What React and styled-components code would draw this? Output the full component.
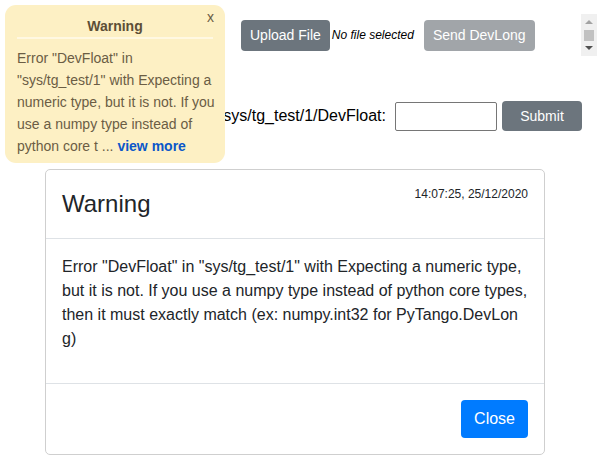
import React from 'react'
import styled, { createGlobalStyle } from 'styled-components'

const GlobalStyle = createGlobalStyle`
  html, body {
    margin: 0;
    padding: 0;
    background: #fff;
    font-family: "Liberation Sans", Arial, sans-serif;
    color: #212529;
  }
`

const Page = styled.div`
  position: relative;
  width: 602px;
  height: 461px;
  overflow: hidden;
  padding-top: 14px;
  box-sizing: border-box;
`

const TopRow = styled.div`
  display: flex;
  align-items: center;
  padding-left: 241px;
  padding-right: 5px;
  height: 42px;
`

const Button = styled.button`
  font-family: inherit;
  font-size: ${p => (p.$size === 'lg' ? '16px' : '14px')};
  line-height: ${p => (p.$size === 'lg' ? '24px' : '21px')};
  padding: ${p => (p.$size === 'lg' ? '6px 12px' : '4px 8px')};
  border: 1px solid transparent;
  border-radius: 4px;
  color: #fff;
  background: ${p => p.$bg || '#6c757d'};
  cursor: pointer;
  margin-left: ${p => p.$ml || 0}px;
`

const FileName = styled.span`
  font-size: 12px;
  font-style: italic;
  color: #000;
  margin-left: 2px;
`

const Scroller = styled.div`
  margin-left: auto;
  width: 16px;
  height: 42px;
  background: #f0f0f0;
  display: flex;
  flex-direction: column;
  align-items: center;
  justify-content: space-between;
  padding: 6px 0;
  box-sizing: border-box;
`

const Arrow = styled.div`
  width: 0;
  height: 0;
  border-left: 4px solid transparent;
  border-right: 4px solid transparent;
  ${p => (p.$down
    ? 'border-top: 4px solid #505050;'
    : 'border-bottom: 4px solid #a3a3a3;')}
`

const Thumb = styled.div`
  width: 10px;
  height: 11px;
  background: #c1c1c1;
`

const FormRow = styled.div`
  display: flex;
  justify-content: flex-end;
  align-items: center;
  padding-right: 20px;
  margin-top: 45px;
`

const Label = styled.label`
  font-size: 16px;
  color: #000;
  margin-right: 9px;
`

const Input = styled.input`
  width: 102px;
  height: 29px;
  box-sizing: border-box;
  border: 1px solid #767676;
  border-radius: 2px;
  margin-right: 5px;
`

const SubmitButton = styled(Button)`
  width: 80px;
  height: 30px;
  padding: 0;
`

const Modal = styled.div`
  margin: 38px 0 0 45px;
  width: 500px;
  border: 1px solid #cfcfcf;
  border-radius: 5px;
  box-sizing: border-box;
`

const ModalHeader = styled.div`
  display: flex;
  justify-content: space-between;
  align-items: flex-start;
  padding: 16px;
  border-bottom: 1px solid #dee2e6;
`

const ModalTitle = styled.h4`
  margin: 0;
  font-size: 24px;
  font-weight: 400;
  line-height: 36px;
`

const Stamp = styled.span`
  font-size: 12px;
  line-height: 16px;
`

const ModalBody = styled.div`
  padding: 16px;
  border-bottom: 1px solid #dee2e6;

  p {
    margin: 0 0 16px;
    font-size: 16px;
    line-height: 24px;
    word-break: break-all;
  }
`

const ModalFooter = styled.div`
  display: flex;
  justify-content: flex-end;
  padding: 16px;
`

const Toast = styled.div`
  position: absolute;
  top: 5px;
  left: 5px;
  width: 220px;
  box-sizing: border-box;
  padding: 10px 8px 6px 12px;
  background: #fdf0c4;
  border-radius: 11px;
  color: #6b5d44;
`

const ToastTitle = styled.div`
  text-align: center;
  font-weight: 700;
  font-size: 14px;
  line-height: 22px;
  color: #5c4e36;
  margin-right: 4px;
  padding-bottom: 0;
  border-bottom: 2px solid #fff8e2;
  margin-bottom: 8px;
`

const ToastClose = styled.span`
  position: absolute;
  top: 4px;
  right: 11px;
  font-size: 14px;
  color: #6b5d44;
`

const ToastText = styled.div`
  font-size: 14px;
  line-height: 22px;

  a {
    color: #0b57c9;
    font-weight: 700;
    text-decoration: none;
  }
`

export default function App() {
  return (
    <Page>
      <GlobalStyle />
      <TopRow>
        <Button>Upload File</Button>
        <FileName>No file selected</FileName>
        <Button $bg="#a1a5a9" $ml={10}>Send DevLong</Button>
        <Scroller>
          <Arrow />
          <Thumb />
          <Arrow $down />
        </Scroller>
      </TopRow>
      <FormRow>
        <Label>sys/tg_test/1/DevFloat:</Label>
        <Input />
        <SubmitButton>Submit</SubmitButton>
      </FormRow>
      <Modal>
        <ModalHeader>
          <ModalTitle>Warning</ModalTitle>
          <Stamp>14:07:25, 25/12/2020</Stamp>
        </ModalHeader>
        <ModalBody>
          <p>
            Error "DevFloat" in "sys/tg_test/1" with Expecting a numeric type, but it is not. If you use a numpy type instead of python core types, then it must exactly match (ex: numpy.int32 for PyTango.DevLong)
          </p>
        </ModalBody>
        <ModalFooter>
          <Button $size="lg" $bg="#007bff">Close</Button>
        </ModalFooter>
      </Modal>
      <Toast>
        <ToastClose>x</ToastClose>
        <ToastTitle>Warning</ToastTitle>
        <ToastText>
          Error "DevFloat" in "sys/tg_test/1" with Expecting a numeric type, but it is not. If you use a numpy type instead of python core t ... <a href="#">view more</a>
        </ToastText>
      </Toast>
    </Page>
  )
}
